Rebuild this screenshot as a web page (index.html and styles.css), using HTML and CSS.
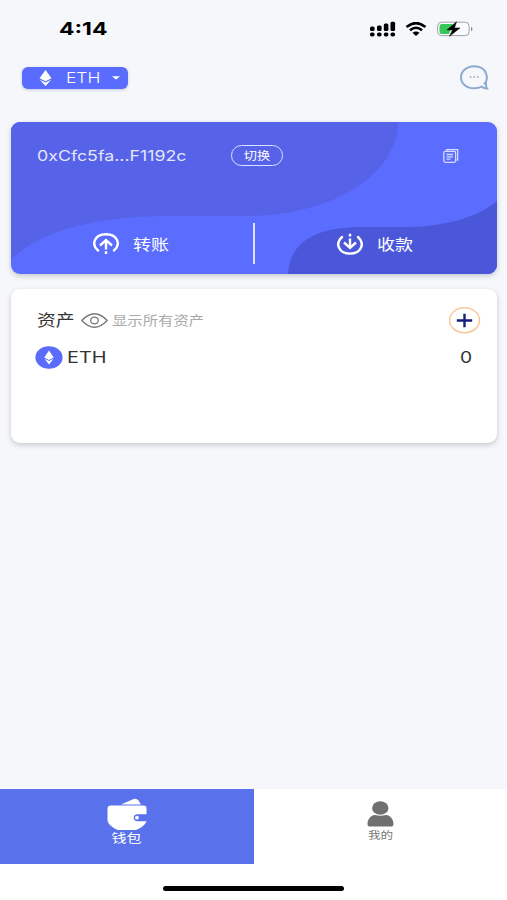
FILE: index.html
```
<!DOCTYPE html>
<html lang="zh">
    <head>
        <meta charset="utf-8">
        <title>钱包</title>
        <link rel="stylesheet" href="styles.css">
    </head>
    <body>
        <div class="status">
            <span class="time wide">4:14</span>
            <div class="status-icons">
                <svg class="signal" width="27" height="16" viewBox="0 0 27 16">
                    <rect x="1" y="5.5" width="4.6" height="4.5" rx="1.5"/>
                    <rect x="8" y="4.5" width="4.6" height="5.5" rx="1.5"/>
                    <rect x="14.8" y="2.5" width="4.6" height="7.5" rx="1.5"/>
                    <rect x="21.5" y="0.8" width="4.6" height="9.2" rx="1.5"/>
                    <rect x="1" y="11.5" width="4.6" height="4" rx="1.8"/>
                    <rect x="8" y="11.5" width="4.6" height="4" rx="1.8"/>
                    <rect x="14.8" y="11.5" width="4.6" height="4" rx="1.8"/>
                    <rect x="21.5" y="11.5" width="4.6" height="4" rx="1.8"/>
                </svg>
                <svg class="wifi" width="22" height="14" viewBox="0 0 22 14">
                    <path d="M1.5 5Q11-2.8 20.5 5M5 8.3Q11 3.2 17 8.3" fill="none" stroke="#000" stroke-width="2.6"/>
                    <path d="M7.5 10.8Q11 8 14.5 10.8L11 14Z"/>
                </svg>
                <svg class="battery" width="36" height="16" viewBox="0 0 36 16">
                    <rect x="0.6" y="1.2" width="31.5" height="13.4" rx="4" fill="#fafbfc" stroke="#a0a2a5"/>
                    <path d="M5 3H16L12 13H5Q2.5 13 2.5 10.5V5.5Q2.5 3 5 3Z" fill="#35c759"/>
                    <path d="M34 5.7Q35.5 6.5 35.5 8T34 10.3Z" fill="#888"/>
                    <path d="M19.5 0.8L10 8.9H15.5L12.5 15.3L23 6.9H17.5Z" stroke="#000" stroke-width="0.5"/>
                </svg>
            </div>
        </div>

        <div class="header">
            <div class="chain">
                <svg class="gem" width="13" height="16" viewBox="0 0 13 16">
                    <path d="M6.5 0L12.5 8.3L6.5 11.2L0.5 8.3Z" fill="#fff"/>
                    <path d="M0.8 9.7L6.5 12.4L12.2 9.7L6.5 16Z" fill="#fff"/>
                </svg>
                <span class="chain-name wide">ETH</span>
                <svg width="8" height="4" viewBox="0 0 8 4"><path d="M0 0.3H8L4 3.5Z" fill="#fff"/></svg>
            </div>
            <svg class="chat" width="30" height="26" viewBox="0 0 30 26">
                <path d="M25 19.5C30.5 13.8 28 1.3 15.3 1.3C7.5 1.3 2 6.3 2 12.5S7.500 23.300 15.300 23.300C18 23.300 20.500 22.700 22.500 21.600C24 23 25.800 23.600 28 23.600C27 22.300 26.900 20.800 27 17.500" fill="none" stroke="#8faacf" stroke-width="2"/>
                <g fill="#a3aec4"><circle cx="11.500" cy="12" r="0.900"/><circle cx="15.300" cy="12" r="0.900"/><circle cx="19" cy="12" r="0.900"/></g>
            </svg>
        </div>

        <div class="card wallet">
            <svg class="waves" width="486" height="152" viewBox="0 0 486 152">
                <path d="M0 0H387C386 54 320 94 235 94H155C80 94 24 112 0 138Z" fill="#5662e7"/>
                <path d="M277 152C279 121 302 105 353 105H398C440 104 470 93 486 79V152Z" fill="#4a57d9"/>
            </svg>
            <div class="account">
                <span class="address wide">0xCfc5fa...F1192c</span>
                <div class="switch"><span class="wide-center">切换</span></div>
                <svg class="copy" width="16" height="14" viewBox="0 0 16 14" fill="none" stroke="#d6daff" stroke-width="1.3">
                    <path d="M3.5 2V0.7H14.7V11H13.5"/>
                    <rect x="0.8" y="2.3" width="11.8" height="11" rx="1.5"/>
                    <path d="M3.5 5.5H10M3.5 7.8H10M3.5 10.2H7.5"/>
                </svg>
            </div>
            <div class="actions">
                <div class="action">
                    <svg width="26" height="22" viewBox="0 0 26 22" fill="none" stroke="#fff" stroke-width="2.4">
                        <path d="M5 17.5C-2.500 11 2 1.300 13 1.300S28.500 11 21 17.500" stroke-linecap="round"/>
                        <path d="M13 7V16.500M7 12.500L13 7.200L19 12.500"/>
                        <path d="M13 18.300V21"/>
                    </svg>
                    <span class="wide">转账</span>
                </div>
                <div class="divider"></div>
                <div class="action">
                    <svg width="26" height="22" viewBox="0 0 26 22" fill="none" stroke="#fff" stroke-width="2.4">
                        <path d="M5 4C-2.500 10.500 2 20.600 13 20.600S28.500 10.500 21 4" stroke-linecap="round"/>
                        <path d="M13 5.500V14.800M7 9.500L13 14.800L19 9.500"/>
                        <path d="M13 0.800V3.500"/>
                    </svg>
                    <span class="wide">收款</span>
                </div>
            </div>
        </div>

        <div class="card assets">
            <div class="assets-head">
                <span class="assets-title wide">资产</span>
                <svg class="eye" width="27" height="15" viewBox="0 0 27 15" fill="none" stroke="#777" stroke-width="1.3">
                    <path d="M0.8 7.5Q13.5-6 26.2 7.5Q13.5 21 0.8 7.5Z"/>
                    <ellipse cx="13.5" cy="7.5" rx="3.8" ry="3.4"/>
                </svg>
                <span class="show-all wide">显示所有资产</span>
                <svg class="add" width="32" height="28" viewBox="0 0 32 28" fill="none">
                    <ellipse cx="15.5" cy="14.3" rx="15" ry="12.5" stroke="#fac697" stroke-width="1.5"/>
                    <path d="M7.800 14.500H23.200M15.500 7.800V21.200" stroke="#171d7c" stroke-width="2.400"/>
                </svg>
            </div>
            <div class="asset">
                <svg width="28" height="23" viewBox="0 0 28 23">
                    <ellipse cx="14" cy="11.5" rx="13.6" ry="11.2" fill="#5b6cfb"/>
                    <path d="M14 4.5L18.7 11.5L14 14L9.3 11.5Z" fill="#fff"/>
                    <path d="M9.5 12.8L14 15L18.5 12.8L14 18.5Z" fill="#fff"/>
                </svg>
                <span class="asset-name wide">ETH</span>
                <span class="asset-amount wide">0</span>
            </div>
        </div>

        <div class="tabs">
            <div class="tab active">
                <svg width="40" height="33" viewBox="0 0 40 33">
                    <path d="M14 6.500L26 1.200Q29.500 0 31.500 2.500L34 6.500Z" fill="#fff"/>
                    <path d="M4 7.500H36.500Q39.500 7.500 39.500 10.500V16.300H30A4 3.500 0 0 0 30 23.200H39.500C38 27 34 30 29 32H11C6 30 0.500 26 0.500 22V10.500Q0.500 7.500 4 7.500Z" fill="#fff"/>
                    <circle cx="30" cy="19.700" r="1.900" fill="#fff"/>
                </svg>
                <span class="wide-center">钱包</span>
            </div>
            <div class="tab">
                <svg width="27" height="26" viewBox="0 0 27 26" fill="#707070">
                    <ellipse cx="13.3" cy="7" rx="8.2" ry="6.8"/>
                    <path d="M8 14Q13.500 15.500 19 14C24 14.500 26.500 19 26.500 23Q26.500 25.600 23.500 25.600H3.500Q0.500 25.600 0.500 23C0.500 19 3 14.500 8 14Z"/>
                </svg>
                <span class="wide-center">我的</span>
            </div>
        </div>
        <div class="home-area"><div class="home-bar"></div></div>
    </body>
</html>
```
FILE: styles.css
```
* {
    box-sizing: border-box;
}

body {
    margin: 0;
    height: 900px;
    display: flex;
    flex-direction: column;
    font-family: Inter, "Noto Sans CJK SC", sans-serif;
    background-color: #f5f7fb;
    color: #333;
    overflow: hidden;
}

svg {
    display: block;
    flex: none;
}

/* stretched lettering */
.wide, .wide-center {
    display: inline-block;
    white-space: nowrap;
    transform: scaleX(1.2);
    transform-origin: left center;
}

.wide-center {
    transform-origin: center;
}

.status {
    height: 57px;
    padding: 0 34px 0 59px;
    display: flex;
    align-items: center;
    justify-content: space-between;
}

.time {
    font-size: 18px;
    font-weight: 700;
    color: #000;
    transform: scaleX(1.27);
}

.status-icons {
    display: flex;
    align-items: center;
}

.wifi {
    margin: 0 10px 0 9px;
}

.header {
    height: 65px;
    padding: 8px 18px 0 22px;
    display: flex;
    align-items: flex-start;
    justify-content: space-between;
}

.chain {
    width: 106px;
    height: 22px;
    margin-top: 2px;
    padding: 0 8px 0 17px;
    display: flex;
    align-items: center;
    justify-content: space-between;
    border-radius: 6px;
    background-color: #5a6cfd;
    box-shadow: 0 1px 3px rgba(80, 90, 150, 0.3);
}

.chain-name {
    width: 32px;
    margin-left: -1px;
    font-size: 14.5px;
    font-weight: 300;
    line-height: 20px;
    margin-bottom: 1px;
    color: #fff;
}

.card {
    flex: none;
    margin: 0 10px 0 11px;
    border-radius: 9px;
    box-shadow: 0 2px 5px rgba(60, 65, 80, 0.25);
}

.wallet {
    height: 152px;
    position: relative;
    overflow: hidden;
    background-color: #5b6dfe;
    color: #fff;
}

.waves {
    position: absolute;
    top: 0;
    left: 0;
}

.account {
    position: relative;
    height: 67px;
    padding: 0 38px 0 26px;
    display: flex;
    align-items: center;
}

.address {
    width: 194px;
    font-size: 14.5px;
    color: #e4e7ff;
    transform: scaleX(1.225);
}

.switch {
    width: 52px;
    height: 21px;
    display: flex;
    align-items: center;
    justify-content: center;
    border: 1.5px solid #dde0ff;
    border-radius: 11px;
    font-size: 11px;
    line-height: 16px;
}

.copy {
    margin-left: auto;
}

.actions {
    position: relative;
    height: 42px;
    margin-top: 34px;
    display: flex;
    align-items: center;
}

.action {
    width: 242px;
    padding-left: 82px;
    display: flex;
    align-items: center;
    gap: 14px;
    font-size: 15px;
}

.action span {
    margin-bottom: 2px;
}

.divider {
    width: 2px;
    height: 41px;
    margin-bottom: 1px;
    background-color: #dfe2ff;
}

.assets {
    height: 154px;
    margin-top: 15px;
    padding: 16px 16px 0 24px;
    background-color: #fff;
}

.assets-head {
    height: 30px;
    display: flex;
    align-items: center;
}

.assets-title {
    width: 44px;
    margin: 0 0 2px 2px;
    font-size: 15.7px;
}

.show-all {
    margin: 0 0 2px 4px;
    font-size: 12.8px;
    color: #aaa;
}

.add {
    margin-left: auto;
}

.asset {
    height: 23px;
    margin-top: 11px;
    display: flex;
    align-items: center;
    font-size: 16px;
}

.asset-name {
    margin: 0 0 1px 4px;
    transform: scaleX(1.24);
}

.asset-amount {
    width: 21px;
    margin: 0 0 1px auto;
}

.tabs {
    height: 75px;
    margin-top: auto;
    display: flex;
    flex: none;
    background-color: #fff;
}

.tab {
    width: 253px;
    padding-top: 12px;
    display: flex;
    flex-direction: column;
    align-items: center;
    font-size: 10.5px;
    line-height: 18px;
    color: #777;
}

.active {
    width: 254px;
    padding-top: 9px;
    background-color: #5972eb;
    color: #fff;
    font-size: 12.5px;
    line-height: 16px;
}

.home-area {
    flex: none;
    height: 36px;
    padding-top: 22px;
    background-color: #fff;
}

.home-bar {
    width: 181px;
    height: 5px;
    margin: 0 auto;
    border-radius: 3px;
    background-color: #000;
}
```
